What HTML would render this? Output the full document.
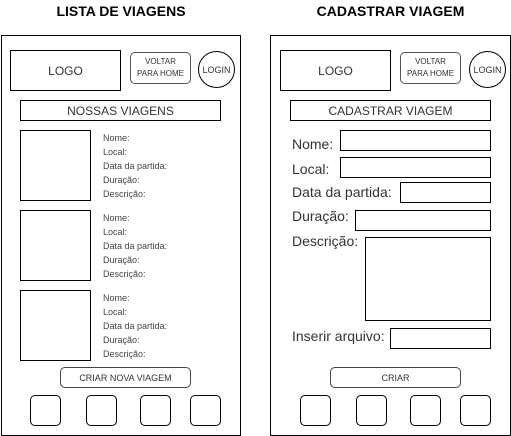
<!DOCTYPE html>
<html><head><meta charset="utf-8"><style>
body{margin:0;width:511px;height:436px;background:#fff;position:relative;overflow:hidden;font-family:"Liberation Sans",Arial,sans-serif;color:#333}
.a{position:absolute;box-sizing:border-box}
.b{border:1px solid #000}
.t{position:absolute;white-space:nowrap}
.c{display:flex;align-items:center;justify-content:center;text-align:center}
.btn{border:1px solid #444;border-radius:5px}
.sq{border:1px solid #000;border-radius:5px;width:31px;height:31px;top:395px}
.info{position:absolute;font-size:9px;line-height:14px;color:#444}
.lb{position:absolute;font-size:14px;color:#333;white-space:nowrap}
</style></head><body>
<div class="t" style="left:0;width:242px;top:3px;text-align:center;font-weight:bold;font-size:14px;color:#000">LISTA DE VIAGENS</div>
<div class="t" style="left:270px;width:241px;top:3px;text-align:center;font-weight:bold;font-size:14px;color:#000">CADASTRAR VIAGEM</div>

<div class="a b" style="left:1px;top:35px;width:240px;height:401px"></div>
<div class="a b c" style="left:10px;top:50px;width:111px;height:41px;font-size:12px">LOGO</div>
<div class="a c" style="left:130px;top:52px;width:61px;height:32px;border:1.5px solid #555;border-radius:5px;font-size:8px;line-height:12px">VOLTAR<br>PARA HOME</div>
<div class="a b c" style="left:198px;top:51px;width:37px;height:37px;border-radius:50%;font-size:9px">LOGIN</div>
<div class="a b c" style="left:20px;top:100px;width:201px;height:21px;font-size:12px">NOSSAS VIAGENS</div>

<div class="a b" style="left:20px;top:130px;width:71px;height:71px"></div>
<div class="info" style="left:103px;top:131px">Nome:<br>Local:<br>Data da partida:<br>Duração:<br>Descrição:</div>
<div class="a b" style="left:20px;top:210px;width:71px;height:71px"></div>
<div class="info" style="left:103px;top:211px">Nome:<br>Local:<br>Data da partida:<br>Duração:<br>Descrição:</div>
<div class="a b" style="left:20px;top:290px;width:71px;height:71px"></div>
<div class="info" style="left:103px;top:291px">Nome:<br>Local:<br>Data da partida:<br>Duração:<br>Descrição:</div>

<div class="a btn c" style="left:60px;top:367px;width:131px;height:21px;font-size:9px">CRIAR NOVA VIAGEM</div>
<div class="a sq" style="left:30px"></div>
<div class="a sq" style="left:86px"></div>
<div class="a sq" style="left:140px"></div>
<div class="a sq" style="left:190px"></div>

<div class="a b" style="left:270px;top:35px;width:241px;height:401px"></div>
<div class="a b c" style="left:280px;top:50px;width:111px;height:41px;font-size:12px">LOGO</div>
<div class="a c" style="left:400px;top:52px;width:61px;height:32px;border:1.5px solid #555;border-radius:5px;font-size:8px;line-height:12px">VOLTAR<br>PARA HOME</div>
<div class="a b c" style="left:469px;top:51px;width:37px;height:37px;border-radius:50%;font-size:9px">LOGIN</div>
<div class="a b c" style="left:290px;top:100px;width:201px;height:21px;font-size:12px">CADASTRAR VIAGEM</div>

<div class="lb" style="left:292px;top:136px">Nome:</div>
<div class="a b" style="left:340px;top:130px;width:151px;height:21px"></div>
<div class="lb" style="left:292px;top:161px">Local:</div>
<div class="a b" style="left:340px;top:157px;width:151px;height:21px"></div>
<div class="lb" style="left:292px;top:184px">Data da partida:</div>
<div class="a b" style="left:400px;top:182px;width:91px;height:21px"></div>
<div class="lb" style="left:292px;top:208px">Duração:</div>
<div class="a b" style="left:355px;top:210px;width:136px;height:21px"></div>
<div class="lb" style="left:292px;top:233px">Descrição:</div>
<div class="a b" style="left:365px;top:237px;width:126px;height:84px"></div>
<div class="lb" style="left:292px;top:328px">Inserir arquivo:</div>
<div class="a b" style="left:390px;top:328px;width:101px;height:21px"></div>

<div class="a btn c" style="left:330px;top:367px;width:131px;height:21px;font-size:9px">CRIAR</div>
<div class="a sq" style="left:300px"></div>
<div class="a sq" style="left:356px"></div>
<div class="a sq" style="left:410px"></div>
<div class="a sq" style="left:460px"></div>
</body></html>
